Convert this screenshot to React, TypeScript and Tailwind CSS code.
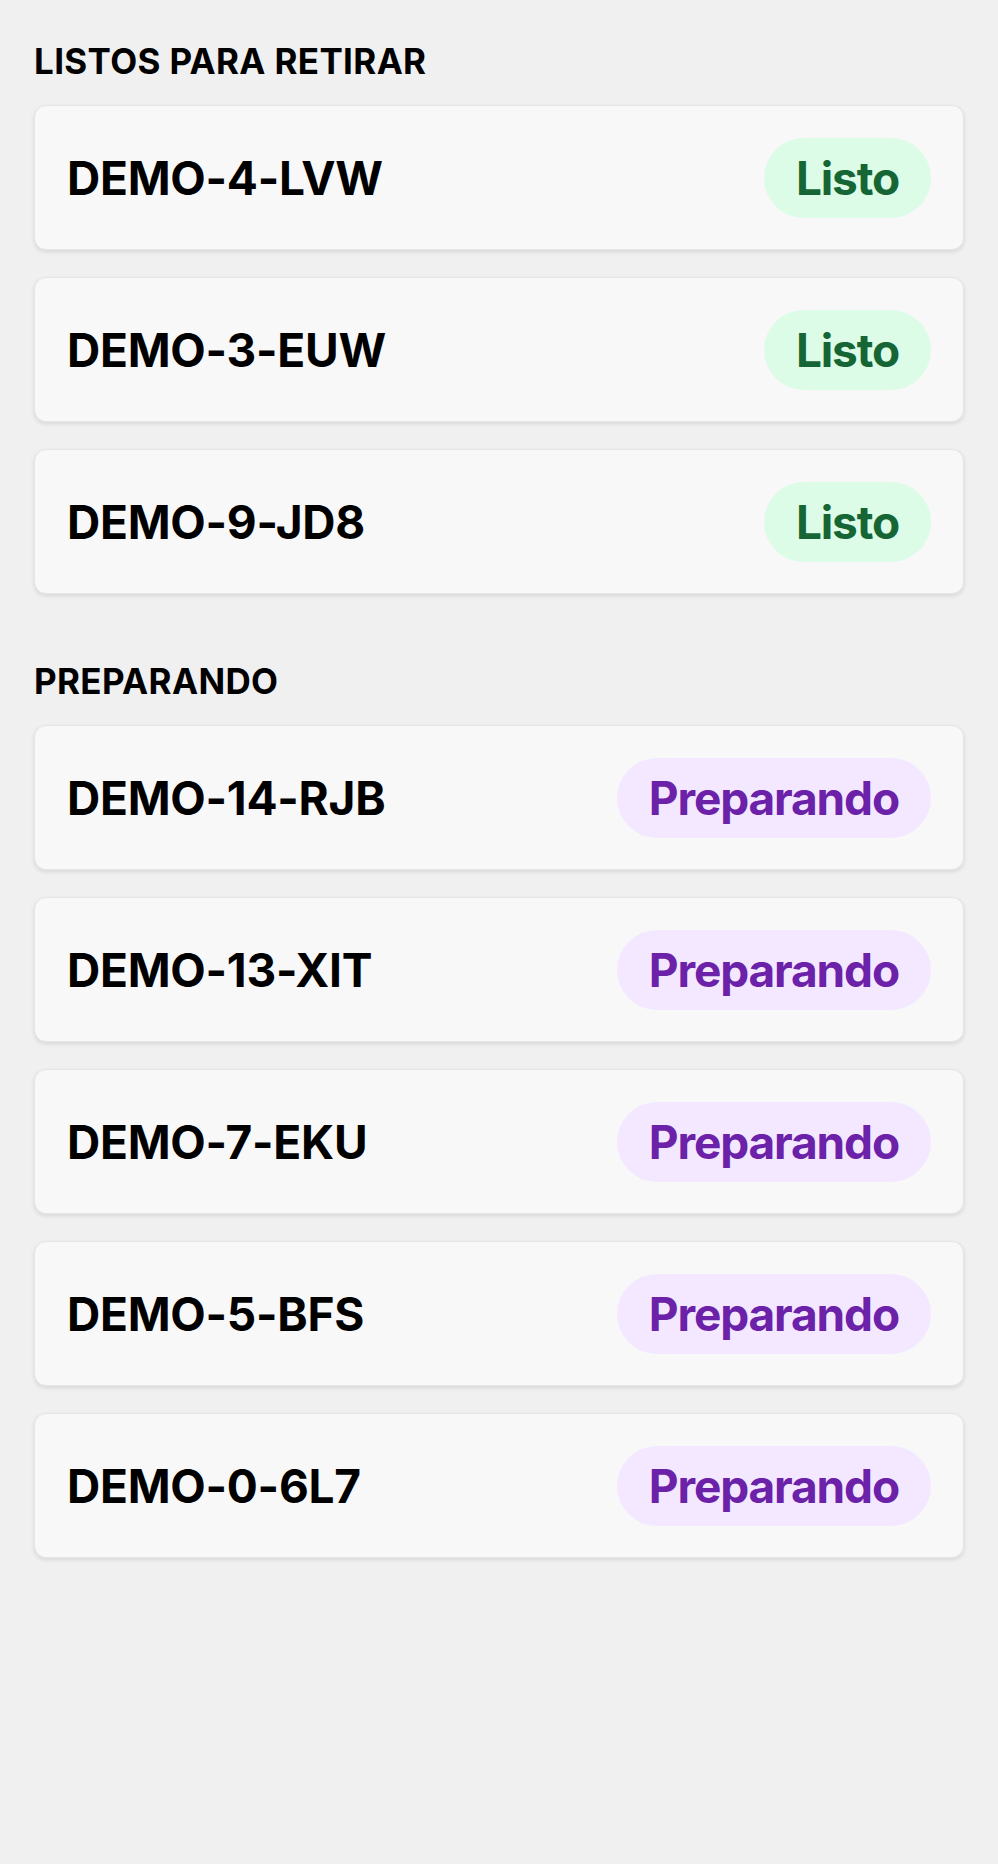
import React from 'react';

type Order = { code: string; status: 'listo' | 'preparando' };

const listos: Order[] = [
  { code: 'DEMO-4-LVW', status: 'listo' },
  { code: 'DEMO-3-EUW', status: 'listo' },
  { code: 'DEMO-9-JD8', status: 'listo' },
];

const preparando: Order[] = [
  { code: 'DEMO-14-RJB', status: 'preparando' },
  { code: 'DEMO-13-XIT', status: 'preparando' },
  { code: 'DEMO-7-EKU', status: 'preparando' },
  { code: 'DEMO-5-BFS', status: 'preparando' },
  { code: 'DEMO-0-6L7', status: 'preparando' },
];

function StatusBadge({ status }: { status: Order['status'] }) {
  if (status === 'listo') {
    return (
      <span className="flex h-[80px] items-center rounded-full bg-[#dcfce7] px-8 text-[46px] leading-none font-bold tracking-tight text-[#166534]">
        Listo
      </span>
    );
  }
  return (
    <span className="flex h-[80px] items-center rounded-full bg-[#f3e8ff] px-8 text-[46px] leading-none font-bold tracking-tight text-[#6b21a8]">
      Preparando
    </span>
  );
}

function OrderCard({ order }: { order: Order }) {
  return (
    <div className="flex h-[145px] items-center justify-between rounded-xl border border-[#e4e4e9] bg-[#f8f8f8] px-8 shadow-[0_2px_4px_rgba(0,0,0,0.1)]">
      <span className="text-[46px] leading-none font-bold tracking-[-0.005em] text-black">{order.code}</span>
      <StatusBadge status={order.status} />
    </div>
  );
}

function Section({ title, orders }: { title: string; orders: Order[] }) {
  return (
    <section>
      <h2 className="mb-[27px] text-[35px] leading-[34px] font-bold tracking-[0.01em] text-black">{title}</h2>
      <div className="flex flex-col gap-[27px]">
        {orders.map((o) => (
          <OrderCard key={o.code} order={o} />
        ))}
      </div>
    </section>
  );
}

export default function App() {
  return (
    <div
      className="min-h-[1864px] bg-[#f0f0f0] px-[34px] pt-[44px]"
      style={{ fontFamily: 'Inter, "Noto Sans", sans-serif' }}
    >
      <div className="flex flex-col gap-[70px]">
        <Section title="LISTOS PARA RETIRAR" orders={listos} />
        <Section title="PREPARANDO" orders={preparando} />
      </div>
    </div>
  );
}
